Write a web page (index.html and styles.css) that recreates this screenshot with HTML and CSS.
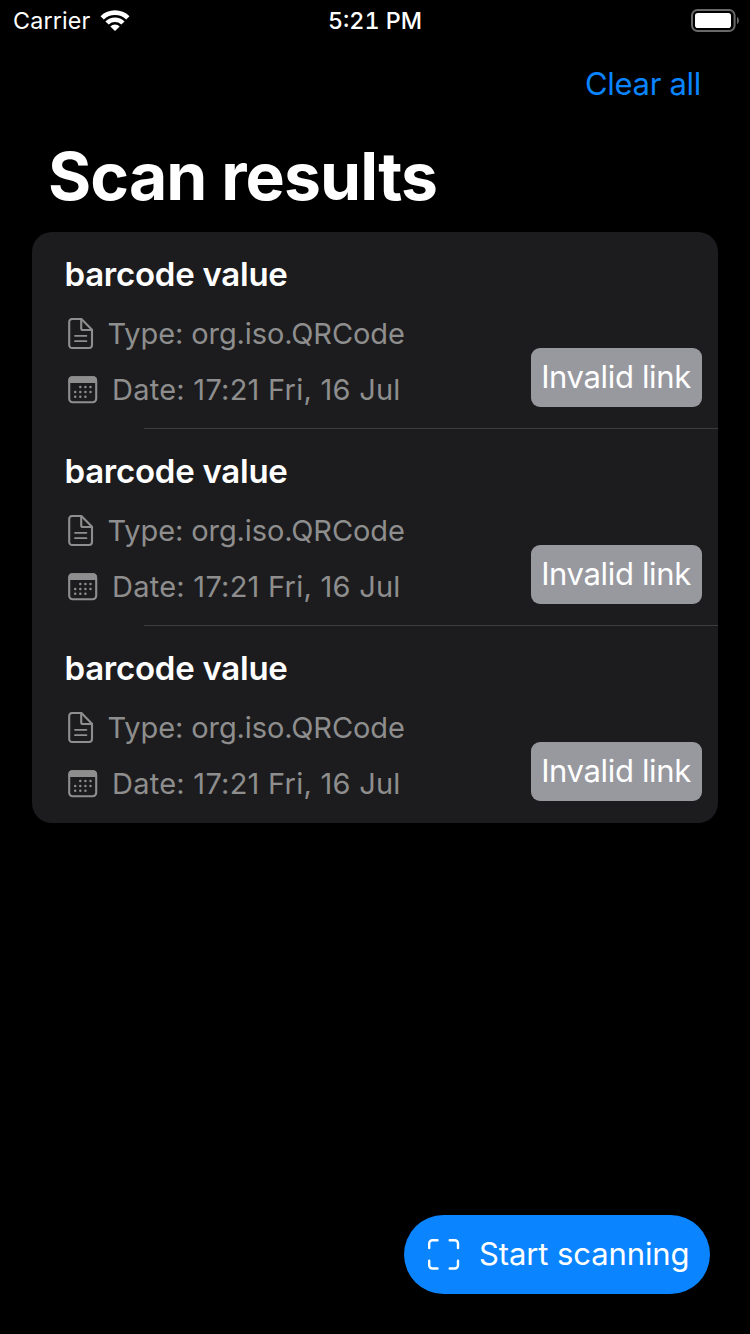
FILE: index.html
```html
<!DOCTYPE html>
<html lang="en">
<head>
<meta charset="utf-8">
<title>Scan results</title>
<link rel="stylesheet" href="styles.css">
</head>
<body>
<svg class="defs" width="0" height="0" aria-hidden="true">
  <symbol id="doc" viewBox="0 0 26 32">
    <g fill="none" stroke="currentColor" stroke-width="2.1" stroke-linejoin="round" stroke-linecap="round">
      <path d="M4.3 1H13.4L24 11.8V27A3 3 0 0 1 21 30H4.3A3 3 0 0 1 1.2 27V4A3 3 0 0 1 4.3 1Z"/>
      <path d="M13.2 1.3V10.2A1.8 1.8 0 0 0 15 12H23.8"/>
      <path d="M7 17.8H18.4M7 23.2H18.4" stroke-width="1.8"/>
    </g>
  </symbol>
  <symbol id="calendar" viewBox="0 0 30 28">
    <rect x="1.2" y="1.2" width="27" height="25" rx="3.5" fill="none" stroke="currentColor" stroke-width="2.1"/>
    <path d="M4 0.3H25.2A3.8 3.8 0 0 1 29 4.1V7H0.4V4.1A3.8 3.8 0 0 1 4 0.3Z" fill="currentColor"/>
    <path d="M12.3 11.1h.01M17.4 11.1h.01M22.5 11.1h.01M7.2 15.9h.01M12.3 15.9h.01M17.4 15.9h.01M22.5 15.9h.01M7.2 20.7h.01M12.3 20.7h.01M17.4 20.7h.01" stroke="currentColor" stroke-width="2.5" stroke-linecap="round"/>
  </symbol>
</svg>
<header class="status">
  <div class="status-left">
    <span class="carrier">Carrier</span>
    <svg class="wifi" viewBox="0 0 30 22" width="30" height="22">
      <path d="M0.5 6.2A20.8 20.8 0 0 1 29.5 6.2L26.2 9.5A16.2 16.2 0 0 0 3.8 9.5Z" fill="#fff"/>
      <path d="M5.4 11.4A13.8 13.8 0 0 1 24.6 11.4L21.3 14.6A9.2 9.2 0 0 0 8.7 14.6Z" fill="#fff"/>
      <path d="M10.3 16.4A6.8 6.8 0 0 1 19.7 16.4L15 21.1Z" fill="#fff"/>
    </svg>
  </div>
  <span class="clock">5:21 PM</span>
  <svg class="battery" viewBox="0 0 48 24" width="48" height="24">
    <rect x="1" y="1" width="42.6" height="21" rx="5.5" fill="none" stroke="#686868" stroke-width="2"/>
    <rect x="4" y="4" width="36" height="15" rx="2.8" fill="#fff"/>
    <path d="M46 8C48.6 9 48.6 14 46 15Z" fill="#686868"/>
  </svg>
</header>
<nav class="nav"><a class="clear">Clear all</a></nav>
<h1 class="title">Scan results</h1>
<main class="list">
  <section class="row">
    <h2 class="value">barcode value</h2>
    <div class="meta type"><svg class="doc"><use href="#doc"/></svg><span>Type: org.iso.QRCode</span></div>
    <div class="meta date"><svg class="calendar"><use href="#calendar"/></svg><span>Date: 17:21 Fri, 16 Jul</span></div>
    <span class="badge">Invalid link</span>
  </section>
  <section class="row">
    <h2 class="value">barcode value</h2>
    <div class="meta type"><svg class="doc"><use href="#doc"/></svg><span>Type: org.iso.QRCode</span></div>
    <div class="meta date"><svg class="calendar"><use href="#calendar"/></svg><span>Date: 17:21 Fri, 16 Jul</span></div>
    <span class="badge">Invalid link</span>
  </section>
  <section class="row">
    <h2 class="value">barcode value</h2>
    <div class="meta type"><svg class="doc"><use href="#doc"/></svg><span>Type: org.iso.QRCode</span></div>
    <div class="meta date"><svg class="calendar"><use href="#calendar"/></svg><span>Date: 17:21 Fri, 16 Jul</span></div>
    <span class="badge">Invalid link</span>
  </section>
</main>
<footer class="footer">
  <button class="scan">
    <svg class="frame" viewBox="0 0 32 32" width="32" height="32"><path d="M1.2 9V4.4A3.2 3.2 0 0 1 4.4 1.2H9.5M21.7 1.2H26.8A3.2 3.2 0 0 1 30 4.4V9M30 21.7V26.3A3.2 3.2 0 0 1 26.8 29.5H21.7M9.5 29.5H4.4A3.2 3.2 0 0 1 1.2 26.3V21.7" fill="none" stroke="#fff" stroke-width="2.4" stroke-linecap="round"/></svg>
    <span class="scan-label">Start scanning</span>
  </button>
</footer>
</body>
</html>
```

FILE: styles.css
```css
* { box-sizing: border-box; margin: 0; }
body {
  display: flex;
  flex-direction: column;
  height: 1334px;
  background: #000;
  color: #fff;
  font-family: Inter, "Liberation Sans", sans-serif;
  white-space: nowrap;
}
.defs { position: absolute; }
.status {
  display: grid;
  grid-template-columns: 1fr auto 1fr;
  height: 40px;
  padding: 0 11px 0 13px;
  align-items: center;
}
.status-left { display: flex; gap: 9.5px; align-items: center; }
.carrier { font-size: 23.3px; line-height: 40px; padding-top: 1px; letter-spacing: 0.15px; }
.clock {
  font-size: 23.3px;
  line-height: 40px;
  font-weight: 500;
  padding: 1px 2px 0 0;
  font-variant-numeric: tabular-nums;
}
.battery { justify-self: end; }
.nav {
  display: flex;
  justify-content: flex-end;
  height: 88px;
  line-height: 88px;
  padding-right: 49px;
}
.clear { font-size: 31px; color: #0a84ff; letter-spacing: -0.3px; }
.title {
  height: 104px;
  padding: 0 0 8px 48px;
  font-size: 66px;
  line-height: 96px;
  font-weight: 700;
  letter-spacing: -0.9px;
}
.list {
  margin: 0 32px;
  border-radius: 20px;
  background: #1c1c1e;
  overflow: hidden;
}
.row {
  display: grid;
  grid-template-columns: 1fr 171px;
  grid-template-rows: 52px 56px 48px;
  height: 197px;
  padding: 20px 16px 0 32px;
  background: linear-gradient(#3d3d40, #3d3d40) 112px 196px / 574px 1px no-repeat;
}
.row:last-child { background: none; }
.value {
  grid-column: 1 / 3;
  font-size: 33px;
  line-height: 44px;
  font-weight: 600;
  letter-spacing: -0.25px;
  padding-left: 0.5px;
}
.meta {
  grid-column: 1;
  display: flex;
  align-items: center;
  height: 56px;
  font-size: 29px;
  line-height: 52px;
  color: #8e8e8e;
  padding: 4px 0 0 3.5px;
}
.type { grid-row: 2; letter-spacing: -0.1px; }
.date { grid-row: 3; letter-spacing: 0.25px; }
.doc { width: 26px; height: 32px; margin-right: 14px; }
.calendar { width: 30px; height: 28px; margin-right: 14.5px; }
.badge {
  grid-column: 2;
  grid-row: 2 / 4;
  align-self: end;
  height: 59px;
  margin-bottom: 1px;
  border-radius: 9px;
  background: #98989f;
  text-align: center;
  font-size: 31px;
  line-height: 58px;
  letter-spacing: -0.35px;
  padding-right: 1px;
}
.footer {
  display: flex;
  justify-content: flex-end;
  margin-top: auto;
  padding: 0 40px 40px;
}
.scan {
  display: flex;
  align-items: center;
  width: 306px;
  height: 79px;
  padding: 0 0 0 23.5px;
  border: 0;
  border-radius: 40px;
  background: #0a84ff;
  color: #fff;
  font: inherit;
  font-size: 31px;
  letter-spacing: -0.1px;
}
.frame { margin-right: 19.5px; }
.scan-label { padding-bottom: 2px; }
```
